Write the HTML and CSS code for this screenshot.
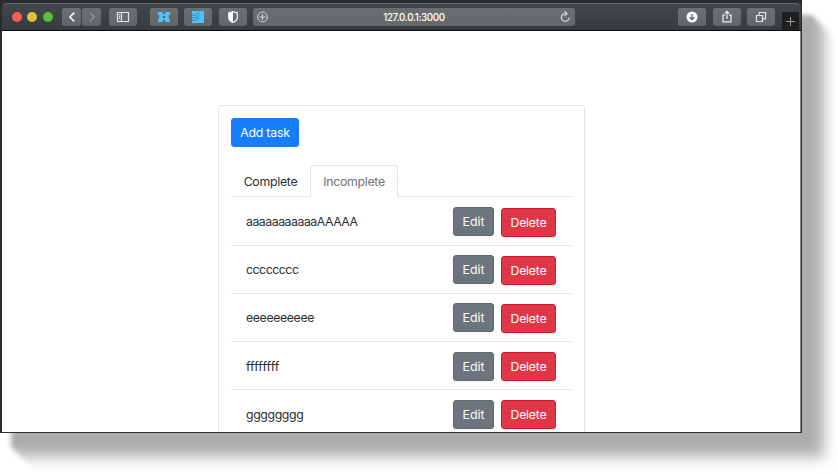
FILE: index.html
```
<!DOCTYPE html>
<html lang="en">
<head>
<meta charset="utf-8">
<title>Tasks</title>
<link rel="stylesheet" href="styles.css">
</head>
<body>
<div class="shadow"><i></i></div>
<div class="window">
  <header class="toolbar">
    <div class="lights"><i class="light red"></i><i class="light yellow"></i><i class="light green"></i></div>
    <div class="nav">
      <span class="tool half"><svg width="18" height="18" viewBox="0 0 18 18"><path d="M11.3 4.6 6.9 9l4.4 4.5" fill="none" stroke="#fff" stroke-width="1.5"/></svg></span>
      <span class="tool half"><svg width="18" height="18" viewBox="0 0 18 18"><path d="M6.8 4.6 11.2 9l-4.4 4.5" fill="none" stroke="#95999b" stroke-width="1.2"/></svg></span>
    </div>
    <span class="tool sidebar"><svg width="14" height="12" viewBox="0 0 14 12"><path d="M1.5 1.5h11v9h-11zM5.500 1.500v9M2.800 3.700h1.400M2.800 5.500h1.400M2.800 7.300h1.400" fill="none" stroke="#e3e4e5" stroke-width="1.2"/></svg></span>
    <span class="tool ext"><svg width="14" height="12" viewBox="0 0 14 12"><path d="M1 1h4.600v2h2.800V1H13v3h-1.200v4H13v3H8.400V9H5.600v2H1V8h1.200V4H1z" fill="#4cc4fb"/><circle cx="7" cy="6" r="1.500" fill="#666b6e"/></svg></span>
    <span class="tool todo"><svg width="14" height="14" viewBox="0 0 14 14"><path d="M1 1h12v12H1z" fill="#4cc4fb"/><path d="M1 4.600 3.200 5.600 8.500 2.800M1 7.200l2.200 1L8.500 5.400M1 9.800l2.200 1L8.500 8" fill="none" stroke="#40748c" stroke-width=".9"/></svg></span>
    <span class="tool shield"><svg width="12" height="14" viewBox="0 0 12 14"><path d="M6 1.500c1.500.9 2.800 1.200 4.300 1.300v4.700c0 2.500-2 4-4.300 5-2.300-1-4.300-2.500-4.300-5V2.800C3.200 2.700 4.500 2.400 6 1.500z" fill="none" stroke="#f1f2f2" stroke-width="1.2"/><path d="M6 1.500v11c-2.300-1-4.300-2.500-4.300-5V2.800C3.200 2.700 4.500 2.400 6 1.500z" fill="#fff"/></svg></span>
    <div class="address">
      <svg width="12" height="12" viewBox="0 0 12 12"><circle cx="5.500" cy="6" r="4.900" fill="none" stroke="#d5d6d7"/><path d="M5.500 3v6M2.500 6h6" stroke="#d5d6d7" stroke-width="1.200"/></svg>
      <span>127.0.0.1:3000</span>
      <svg width="12" height="12" viewBox="0 0 12 12"><path d="M6.500 2.500a3.900 3.900 0 1 0 3.700 3.900M5.500.4l2.600 2.100-2.600 2.200" fill="none" stroke="#d9dadb" stroke-width="1.200"/></svg>
    </div>
    <div class="actions">
      <span class="tool"><svg width="12" height="12" viewBox="0 0 12 12"><circle cx="6" cy="6" r="5.500" fill="#fff"/><path d="M6 3v5.500M3.700 6.300 6 8.600l2.300-2.300" fill="none" stroke="#5d6265" stroke-width="1.300"/></svg></span>
      <span class="tool"><svg width="12" height="14" viewBox="0 0 12 14"><path d="M4 5.200H2v6.600h8V5.200H8M6 9V1.500M3.700 3.700 6 1.400l2.300 2.300" fill="none" stroke="#e9eaeb" stroke-width="1.200"/></svg></span>
      <span class="tool"><svg width="12" height="12" viewBox="0 0 12 12"><path d="M1.500 4.500h6v6h-6zM4.200 4.500v-3h6.300v6.300h-3" fill="none" stroke="#e2e3e4" stroke-width="1.200"/></svg></span>
    </div>
    <span class="newtab"><svg width="11" height="11" viewBox="0 0 11 11"><path d="M5.500 1v9M1 5.500h9" stroke="#9a9c9d"/></svg></span>
  </header>
  <main class="page">
    <section class="card">
      <button class="btn primary">Add task</button>
      <nav class="tabs"><a class="tab">Complete</a><a class="tab active">Incomplete</a></nav>
      <ul class="list">
        <li><span class="title t-a">aaaaaaaaaaaAAAAA</span><button class="btn edit">Edit</button><button class="btn delete">Delete</button></li>
        <li><span class="title t-c">cccccccc</span><button class="btn edit">Edit</button><button class="btn delete">Delete</button></li>
        <li><span class="title t-e">eeeeeeeeee</span><button class="btn edit">Edit</button><button class="btn delete">Delete</button></li>
        <li><span class="title t-f">ffffffff</span><button class="btn edit">Edit</button><button class="btn delete">Delete</button></li>
        <li><span class="title t-g">gggggggg</span><button class="btn edit">Edit</button><button class="btn delete">Delete</button></li>
      </ul>
    </section>
  </main>
</div>
</body>
</html>
```
FILE: styles.css
```
* { box-sizing: border-box; }
html, body { margin: 0; height: 100%; overflow: hidden; background: #fff; }
body { position: relative; font: 12.3px/19px Inter, "Liberation Sans", sans-serif; color: #2b2f33; }
svg { display: block; flex: none; }

/* Soft drop shadow with bevelled corners, behind the window */
.shadow { position: absolute; inset: 0; filter: blur(2.5px); }
.shadow i {
  position: absolute;
  inset: 0;
  clip-path: polygon(11px 15px, 812px 15px, 860px 63px, 860px 500px, 64px 500px, 11px 447px);
}
.shadow i::before {
  content: "";
  position: absolute;
  inset: -30px 14px 17px -30px;
  background: #adadad;
  filter: blur(7px);
}
.window {
  position: relative;
  display: flex;
  flex-direction: column;
  width: 802px;
  height: 433px;
  padding: 3px 1px 0 2px;
  background: #2b2c2e;
  border-bottom: 1px solid #303133;
}
.toolbar {
  display: flex;
  align-items: center;
  flex: none;
  height: 28px;
  padding-left: 10px;
  background: linear-gradient(#42474b, #363b3f);
  border-top: 1px solid #62676a;
  border-bottom: 1px solid #0c0e0f;
  border-radius: 5px 5px 0 0;
}
.lights { display: flex; gap: 5.4px; width: 50px; }
.light { width: 10px; height: 10px; border-radius: 50%; }
.red { background: #fc5b57; }
.yellow { background: #e5bf3c; }
.green { background: #57c038; }
.nav { display: flex; gap: 1px; }
.tool {
  display: flex;
  align-items: center;
  justify-content: center;
  width: 28px;
  height: 18px;
  background: linear-gradient(#6c7073, #626669);
  border-radius: 3px;
}
.half { width: 19px; }
.sidebar { margin-left: 8px; }
.ext { margin-left: 13px; }
.todo { margin-left: 6px; }
.shield { margin-left: 7px; }
.address {
  display: flex;
  align-items: center;
  justify-content: space-between;
  width: 322px;
  height: 18px;
  margin-left: 6px;
  padding: 0 4px;
  color: #fff;
  background: linear-gradient(#6b6f72, #64686b);
  border-radius: 3px;
  font-size: 9.8px;
  font-weight: 500;
  letter-spacing: -0.33px;
}
.actions { display: flex; gap: 6.5px; margin-left: 103px; }
.newtab {
  display: flex;
  align-items: center;
  justify-content: center;
  align-self: flex-end;
  width: 17px;
  height: 18px;
  margin-left: 7px;
  background: #1d1f20;
}
.page {
  flex: 1;
  min-height: 0;
  overflow: hidden;
  padding: 74px 215px 0 216px;
  background: #fff;
  border-right: 1px solid #8b8b8b;
}
.card {
  width: 367px;
  height: 360px;
  padding: 12px;
  border: 1px solid #e1e2e3;
  border-radius: 3px;
}
.btn {
  display: block;
  height: 29px;
  padding: 0;
  color: #fff;
  font: inherit;
  letter-spacing: -0.2px;
  text-align: center;
  border: 1px solid;
  border-radius: 3px;
}
.primary { width: 68px; background: #167dff; border-color: #167dff; }
.edit { width: 41px; margin-right: 7px; background: #6c757d; border-color: #5e6871; letter-spacing: 0; }
.delete { width: 55px; margin-top: 1px; background: #db3848; border-color: #d51427; }
.tabs { display: flex; height: 32px; margin-top: 18px; border-bottom: 1px solid #e3e5e7; letter-spacing: -0.28px; }
.tab {
  height: 32px;
  width: 79px;
  padding-top: 6px;
  text-align: center;
  border: 1px solid transparent;
  border-radius: 3px 3px 0 0;
}
.active {
  width: 88px;
  color: #6c7278;
  background: #fff;
  border-color: #dfe2e5 #dfe2e5 #fff;
}
.list { margin: 0; padding: 0.5px 0 0; list-style: none; }
.list li {
  display: flex;
  align-items: center;
  height: 48.2px;
  padding: 1px 16px 0 15px;
  border-bottom: 1px solid #e4e5e6;
}
.title { flex: 1; }
.t-a { letter-spacing: -0.47px; }
.t-c { letter-spacing: -0.47px; }
.t-e { letter-spacing: -0.37px; }
.t-f { letter-spacing: 0.05px; }
.t-g { letter-spacing: -0.37px; }
```
